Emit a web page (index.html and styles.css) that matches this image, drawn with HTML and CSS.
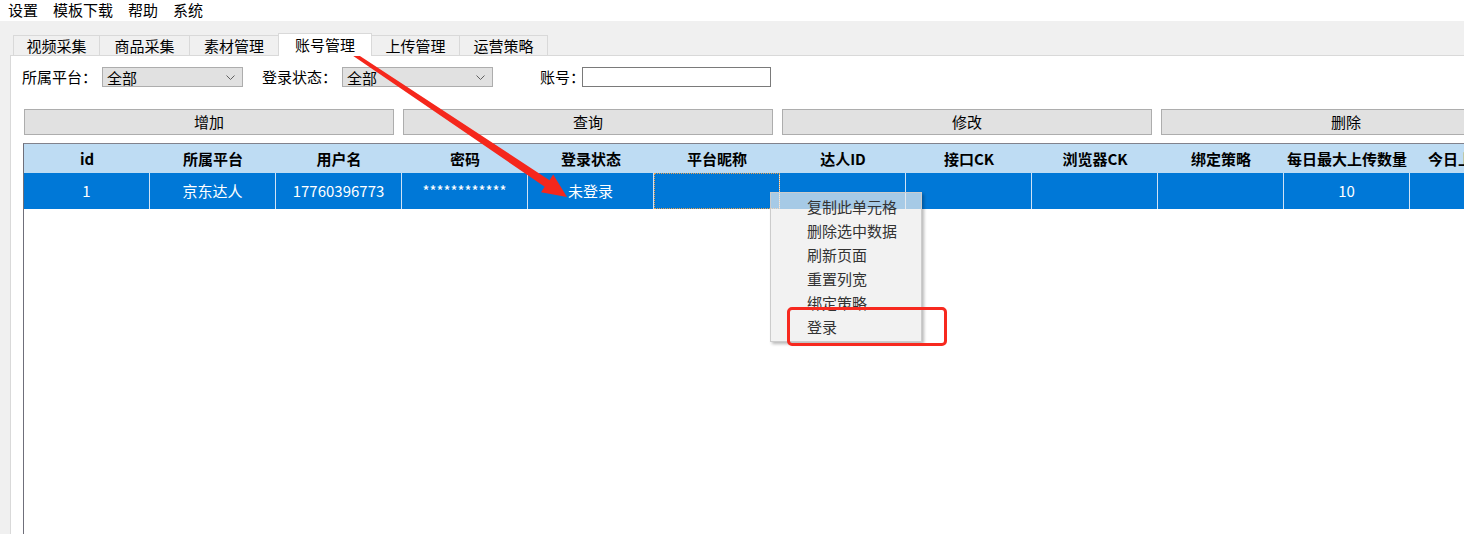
FILE: index.html
```html
<!DOCTYPE html>
<html lang="zh-CN">
<head>
<meta charset="utf-8">
<title>账号管理</title>
<link rel="stylesheet" href="styles.css">
</head>
<body>
<div class="app">
  <div class="menubar">
    <span class="mi">设置</span>
    <span class="mi">模板下载</span>
    <span class="mi">帮助</span>
    <span class="mi">系统</span>
  </div>
  <div class="tabs">
    <div class="tab w1">视频采集</div>
    <div class="tab w2">商品采集</div>
    <div class="tab w3">素材管理</div>
    <div class="tab active">账号管理</div>
    <div class="tab w5">上传管理</div>
    <div class="tab w5">运营策略</div>
  </div>
  <div class="panel">
    <div class="filters">
      <span class="lbl l1">所属平台：</span>
      <div class="combo c1"><span>全部</span><svg class="chev" width="9" height="5" viewBox="0 0 9 5"><path d="M0.5 0.5 L4.5 4.5 L8.5 0.5" fill="none" stroke="#606060" stroke-width="1"/></svg></div>
      <span class="lbl l2">登录状态：</span>
      <div class="combo c2"><span>全部</span><svg class="chev" width="9" height="5" viewBox="0 0 9 5"><path d="M0.5 0.5 L4.5 4.5 L8.5 0.5" fill="none" stroke="#606060" stroke-width="1"/></svg></div>
      <span class="lbl l3">账号：</span>
      <div class="input"></div>
    </div>
    <div class="buttons">
      <div class="btn">增加</div>
      <div class="btn">查询</div>
      <div class="btn">修改</div>
      <div class="btn">删除</div>
    </div>
    <div class="grid">
      <div class="grow head">
        <div class="cell">id</div>
        <div class="cell">所属平台</div>
        <div class="cell">用户名</div>
        <div class="cell">密码</div>
        <div class="cell">登录状态</div>
        <div class="cell">平台昵称</div>
        <div class="cell">达人ID</div>
        <div class="cell">接口CK</div>
        <div class="cell">浏览器CK</div>
        <div class="cell">绑定策略</div>
        <div class="cell">每日最大上传数量</div>
        <div class="cell">今日上传数量</div>
      </div>
      <div class="grow row">
        <div class="cell">1</div>
        <div class="cell">京东达人</div>
        <div class="cell">17760396773</div>
        <div class="cell">************</div>
        <div class="cell">未登录</div>
        <div class="cell focus"></div>
        <div class="cell"></div>
        <div class="cell"></div>
        <div class="cell"></div>
        <div class="cell"></div>
        <div class="cell">10</div>
        <div class="cell"></div>
      </div>
    </div>
  </div>

  <div class="ctxmenu">
    <div class="ci">复制此单元格</div>
    <div class="ci">删除选中数据</div>
    <div class="ci">刷新页面</div>
    <div class="ci">重置列宽</div>
    <div class="ci">绑定策略</div>
    <div class="ci">登录</div>
  </div>
  <div class="redbox"></div>
  <svg class="arrow" width="1464" height="534" viewBox="0 0 1464 534">
    <polygon points="330.9,37.0 549.5,180.2 553.2,174.4 567,197 541,192.3 544.7,186.7 329.1,39.6" fill="#f5271c"/>
  </svg>
</div>
</body>
</html>
```
FILE: styles.css
```css
html, body {
  margin: 0;
  padding: 0;
}
body {
  width: 1464px;
  height: 534px;
  overflow: hidden;
  background: #f0f0f0;
  font-family: "Noto Sans CJK SC", "Noto Sans", sans-serif;
  font-size: 15px;
  color: #000;
}
.app {
  position: relative;
  width: 1464px;
  height: 534px;
  overflow: hidden;
}
.menubar {
  height: 21px;
  background: #fff;
  display: flex;
  gap: 15px;
  padding-left: 8px;
  line-height: 19px;
}
.tabs {
  display: flex;
  align-items: flex-end;
  height: 22px;
  margin-top: 12px;
  padding-left: 13px;
}
.tab {
  box-sizing: border-box;
  height: 20px;
  border: 1px solid #d9d9d9;
  border-bottom: none;
  margin-right: -1px;
  background: #f0f0f0;
  text-align: center;
  line-height: 19px;
}
.w1 { width: 87px; }
.w2 { width: 91px; }
.w3 { width: 90px; }
.w5 { width: 89px; }
.tab.active {
  position: relative;
  z-index: 2;
  width: 94px;
  height: 23px;
  margin-bottom: -1px;
  background: #fff;
  line-height: 22px;
  padding-bottom: 1px;
}
.panel {
  margin-left: 10px;
  height: 478px;
  background: #fff;
  border-top: 1px solid #d9d9d9;
  border-left: 1px solid #d9d9d9;
  overflow: hidden;
}
.filters {
  display: flex;
  align-items: center;
  height: 20px;
  margin-top: 11px;
  padding-left: 11px;
}
.lbl {
  white-space: nowrap;
  line-height: 20px;
  flex: none;
  overflow: visible;
}
.l1 { width: 80px; }
.l2 { width: 80px; margin-left: 19px; }
.l3 { width: 42px; margin-left: 47px; }
.combo {
  box-sizing: border-box;
  flex: none;
  height: 20px;
  background: #e1e1e1;
  border: 1px solid #adadad;
  display: flex;
  align-items: center;
  justify-content: space-between;
  padding: 0 7px 0 4px;
  line-height: 18px;
}
.combo span {
  padding-top: 2px;
}
.c1 { width: 141px; }
.c2 { width: 151px; }
.chev { display: block; }
.input {
  box-sizing: border-box;
  flex: none;
  width: 189px;
  height: 20px;
  border: 1px solid #7a7a7a;
  background: #fff;
}
.buttons {
  display: flex;
  gap: 9px;
  margin-top: 22px;
  padding-left: 13px;
}
.btn {
  box-sizing: border-box;
  flex: none;
  width: 370px;
  height: 26px;
  background: #e1e1e1;
  border: 1px solid #adadad;
  text-align: center;
  line-height: 24px;
}
.grid {
  margin-top: 8px;
  margin-left: 12px;
  width: 1600px;
  height: 400px;
  border-top: 1px solid #82828c;
  border-left: 1px solid #6f6f7a;
  background: #fff;
}
.grow {
  display: flex;
}
.cell {
  box-sizing: border-box;
  flex: none;
  width: 126px;
  text-align: center;
  white-space: nowrap;
  overflow: hidden;
}
.head {
  height: 29px;
  background: #bedcf3;
  font-weight: 700;
}
.head .cell {
  line-height: 29px;
}
.row {
  height: 36px;
  background: #0078d7;
  color: #fff;
}
.row .cell {
  line-height: 36px;
  border-right: 1px solid #cfe2f5;
}
.row .cell.focus {
  outline: 1px dotted #e8a050;
  outline-offset: -1px;
}
.ctxmenu {
  position: absolute;
  left: 770px;
  top: 192px;
  box-sizing: border-box;
  width: 152px;
  height: 150px;
  padding: 2px 0 0;
  background: rgba(236, 236, 236, 0.7);
  border: 1px solid #cccccc;
  box-shadow: 2px 2px 3px rgba(0, 0, 0, 0.28);
  color: #333;
}
.ci {
  height: 24px;
  line-height: 24px;
  padding-left: 36px;
  white-space: nowrap;
}
.redbox {
  position: absolute;
  left: 787px;
  top: 307px;
  box-sizing: border-box;
  width: 160px;
  height: 39px;
  border: 3px solid #f7291f;
  border-radius: 5px;
}
.arrow {
  position: absolute;
  left: 0;
  top: 0;
  pointer-events: none;
}
```
